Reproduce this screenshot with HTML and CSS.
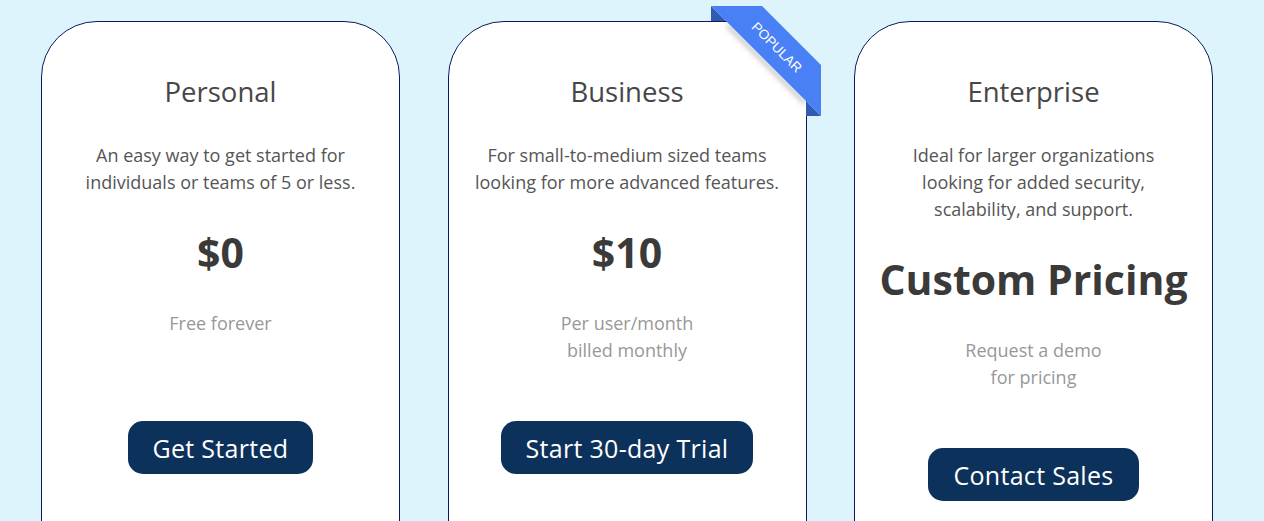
FILE: index.html
```html
<!DOCTYPE html>
<html lang="en">
<head>
<meta charset="utf-8">
<title>Pricing</title>
<link rel="stylesheet" href="styles.css">
</head>
<body>
<main class="plans">
  <section class="card">
    <h2 class="title">Personal</h2>
    <p class="desc">An easy way to get started for<br>individuals or teams of 5 or less.</p>
    <div class="price">$0</div>
    <p class="sub">Free forever</p>
    <a class="btn" href="#">Get Started</a>
  </section>
  <section class="card">
    <svg class="ribbon" width="110" height="110" viewBox="0 0 110 110">
      <defs>
        <filter id="blur" x="-20%" y="-20%" width="140%" height="140%"><feGaussianBlur stdDeviation="2.5"/></filter>
      </defs>
      <polygon points="16,16 94,94 94,100 16,22" fill="rgba(0,0,0,0.22)" filter="url(#blur)"/>
      <polygon points="0,0 0,15 15,15" fill="#2f5bb0"/>
      <polygon points="95,95 110,110 95,110" fill="#2f5bb0"/>
      <polygon points="0,0 51,0 110,59 110,110" fill="#4a80f5"/>
      <text class="ribbon-text" transform="translate(65,42) rotate(45)" text-anchor="middle" dominant-baseline="middle">POPULAR</text>
    </svg>
    <h2 class="title">Business</h2>
    <p class="desc">For small-to-medium sized teams<br>looking for more advanced features.</p>
    <div class="price">$10</div>
    <p class="sub">Per user/month<br>billed monthly</p>
    <a class="btn" href="#">Start 30-day Trial</a>
  </section>
  <section class="card">
    <h2 class="title">Enterprise</h2>
    <p class="desc">Ideal for larger organizations<br>looking for added security,<br>scalability, and support.</p>
    <div class="price">Custom Pricing</div>
    <p class="sub">Request a demo<br>for pricing</p>
    <a class="btn" href="#">Contact Sales</a>
  </section>
</main>
</body>
</html>
```
FILE: styles.css
```css
html, body {
  margin: 0;
  padding: 0;
}
body {
  background: #ddf4fd;
  font-family: "Open Sans", "Noto Sans", sans-serif;
  overflow: hidden;
  height: 521px;
}
.plans {
  display: flex;
  gap: 47.5px;
  padding: 21px 0 0 41px;
}
.card {
  position: relative;
  box-sizing: border-box;
  width: 359px;
  min-height: 600px;
  background: #fff;
  border: 1px solid #0b1a5e;
  border-radius: 56px;
  padding-top: 53px;
  text-align: center;
  display: flex;
  flex-direction: column;
  align-items: center;
}
.title {
  margin: 0;
  font-size: 27.5px;
  line-height: 34px;
  font-weight: 400;
  color: #474747;
}
.desc {
  margin: 33px 0 0;
  font-size: 18px;
  line-height: 27px;
  font-weight: 400;
  color: #555;
}
.price {
  margin-top: 29px;
  font-size: 41px;
  line-height: 54px;
  font-weight: 700;
  color: #3a3a3a;
}
.sub {
  margin: 31px 0 0;
  min-height: 54px;
  font-size: 18px;
  line-height: 27px;
  color: #989898;
}
.btn {
  margin-top: 57px;
  display: inline-flex;
  align-items: center;
  justify-content: center;
  height: 53px;
  padding: 0 25px;
  box-sizing: border-box;
  border-radius: 15px;
  background: #0c315b;
  color: #fff;
  font-size: 25px;
  letter-spacing: 0.3px;
  text-decoration: none;
}
.ribbon {
  position: absolute;
  left: 262px;
  top: -16px;
  overflow: visible;
}
.ribbon-text {
  fill: #fff;
  font-family: "Liberation Sans", Arial, sans-serif;
  font-size: 13.5px;
}
```
